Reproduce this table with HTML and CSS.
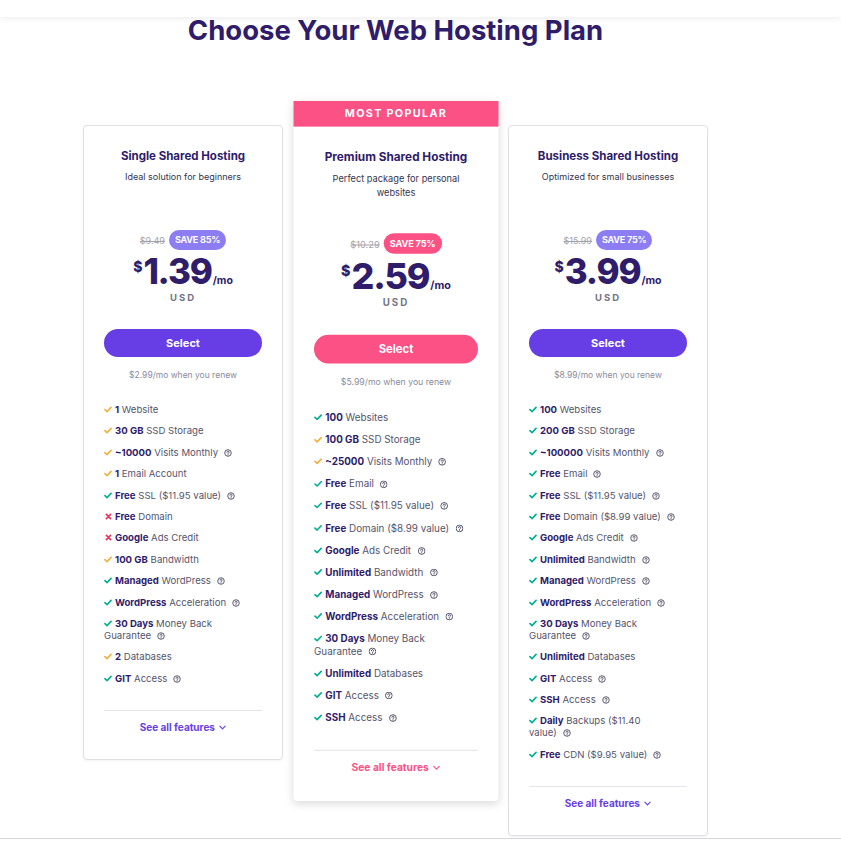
FILE: index.html
```html
<!DOCTYPE html>
<html lang="en">
<head>
<meta charset="utf-8">
<title>Choose Your Web Hosting Plan</title>
<link rel="stylesheet" href="styles.css">
</head>
<body>
<svg class="defs" width="0" height="0" aria-hidden="true">
  <symbol id="i-check" viewBox="0 0 10 8"><polyline points="1.2,4.2 3.8,6.6 8.8,1.4" fill="none" stroke="currentColor" stroke-width="2" stroke-linecap="round" stroke-linejoin="round"/></symbol>
  <symbol id="i-x" viewBox="0 0 8 8"><path d="M1.6 1.6 6.4 6.4M6.4 1.6 1.6 6.4" fill="none" stroke="currentColor" stroke-width="1.8" stroke-linecap="round"/></symbol>
  <symbol id="i-q" viewBox="0 0 10 10"><circle cx="5" cy="5" r="4.1" fill="none" stroke="currentColor" stroke-width="1"/><path d="M3.7 4.1a1.35 1.35 0 1 1 1.9 1.2c-.4.2-.6.45-.6.85v.2" fill="none" stroke="currentColor" stroke-width="1" stroke-linecap="round"/><circle cx="5" cy="7.6" r=".6" fill="currentColor"/></symbol>
  <symbol id="i-chev" viewBox="0 0 8 5"><polyline points="1,1 4,4 7,1" fill="none" stroke="currentColor" stroke-width="1.3" stroke-linecap="round" stroke-linejoin="round"/></symbol>
</svg>
<div class="topbar"></div>
<main class="content">
  <h1 class="title">Choose Your Web Hosting Plan</h1>
  <div class="plans">

    <article class="card">
      <div class="card-body">
        <div class="head">
          <h2 class="plan-name">Single Shared Hosting</h2>
          <p class="plan-desc">Ideal solution for beginners</p>
        </div>
        <div class="price-row"><span class="old">$9.49</span><span class="save">SAVE 85%</span></div>
        <div class="price"><span class="cur">$</span><span class="amt">1.39</span><span class="per">/mo</span></div>
        <div class="usd">USD</div>
        <button class="select">Select</button>
        <p class="renew">$2.99/mo when you renew</p>
        <ul class="features">
          <li><svg class="mk ok-o"><use href="#i-check"/></svg><b>1</b> Website</li>
          <li><svg class="mk ok-o"><use href="#i-check"/></svg><b>30 GB</b> SSD Storage</li>
          <li><svg class="mk ok-o"><use href="#i-check"/></svg><b>~10000</b> Visits <span class="nw">Monthly<svg class="q"><use href="#i-q"/></svg></span></li>
          <li><svg class="mk ok-o"><use href="#i-check"/></svg><b>1</b> Email Account</li>
          <li><svg class="mk ok"><use href="#i-check"/></svg><b>Free</b> SSL ($11.95 <span class="nw">value)<svg class="q"><use href="#i-q"/></svg></span></li>
          <li><svg class="mk no"><use href="#i-x"/></svg><b>Free</b> Domain</li>
          <li><svg class="mk no"><use href="#i-x"/></svg><b>Google</b> Ads Credit</li>
          <li><svg class="mk ok-o"><use href="#i-check"/></svg><b>100 GB</b> Bandwidth</li>
          <li><svg class="mk ok"><use href="#i-check"/></svg><b>Managed</b> <span class="nw">WordPress<svg class="q"><use href="#i-q"/></svg></span></li>
          <li><svg class="mk ok"><use href="#i-check"/></svg><b>WordPress</b> <span class="nw">Acceleration<svg class="q"><use href="#i-q"/></svg></span></li>
          <li><svg class="mk ok"><use href="#i-check"/></svg><b>30 Days</b> Money Back <span class="nw">Guarantee<svg class="q"><use href="#i-q"/></svg></span></li>
          <li><svg class="mk ok-o"><use href="#i-check"/></svg><b>2</b> Databases</li>
          <li><svg class="mk ok"><use href="#i-check"/></svg><b>GIT</b> <span class="nw">Access<svg class="q"><use href="#i-q"/></svg></span></li>
        </ul>
        <div class="more">See all features <svg class="chev"><use href="#i-chev"/></svg></div>
      </div>
    </article>

    <article class="card card--popular">
      <div class="banner">MOST POPULAR</div>
      <div class="card-body">
        <div class="head">
          <h2 class="plan-name">Premium Shared Hosting</h2>
          <p class="plan-desc">Perfect package for personal websites</p>
        </div>
        <div class="price-row"><span class="old">$10.29</span><span class="save save--pink">SAVE 75%</span></div>
        <div class="price"><span class="cur">$</span><span class="amt">2.59</span><span class="per">/mo</span></div>
        <div class="usd">USD</div>
        <button class="select select--pink">Select</button>
        <p class="renew">$5.99/mo when you renew</p>
        <ul class="features">
          <li><svg class="mk ok"><use href="#i-check"/></svg><b>100</b> Websites</li>
          <li><svg class="mk ok-o"><use href="#i-check"/></svg><b>100 GB</b> SSD Storage</li>
          <li><svg class="mk ok-o"><use href="#i-check"/></svg><b>~25000</b> Visits <span class="nw">Monthly<svg class="q"><use href="#i-q"/></svg></span></li>
          <li><svg class="mk ok"><use href="#i-check"/></svg><b>Free</b> <span class="nw">Email<svg class="q"><use href="#i-q"/></svg></span></li>
          <li><svg class="mk ok"><use href="#i-check"/></svg><b>Free</b> SSL ($11.95 <span class="nw">value)<svg class="q"><use href="#i-q"/></svg></span></li>
          <li><svg class="mk ok"><use href="#i-check"/></svg><b>Free</b> Domain ($8.99 <span class="nw">value)<svg class="q"><use href="#i-q"/></svg></span></li>
          <li><svg class="mk ok"><use href="#i-check"/></svg><b>Google</b> Ads <span class="nw">Credit<svg class="q"><use href="#i-q"/></svg></span></li>
          <li><svg class="mk ok"><use href="#i-check"/></svg><b>Unlimited</b> <span class="nw">Bandwidth<svg class="q"><use href="#i-q"/></svg></span></li>
          <li><svg class="mk ok"><use href="#i-check"/></svg><b>Managed</b> <span class="nw">WordPress<svg class="q"><use href="#i-q"/></svg></span></li>
          <li><svg class="mk ok"><use href="#i-check"/></svg><b>WordPress</b> <span class="nw">Acceleration<svg class="q"><use href="#i-q"/></svg></span></li>
          <li><svg class="mk ok"><use href="#i-check"/></svg><b>30 Days</b> Money Back <span class="nw">Guarantee<svg class="q"><use href="#i-q"/></svg></span></li>
          <li><svg class="mk ok"><use href="#i-check"/></svg><b>Unlimited</b> Databases</li>
          <li><svg class="mk ok"><use href="#i-check"/></svg><b>GIT</b> <span class="nw">Access<svg class="q"><use href="#i-q"/></svg></span></li>
          <li><svg class="mk ok"><use href="#i-check"/></svg><b>SSH</b> <span class="nw">Access<svg class="q"><use href="#i-q"/></svg></span></li>
        </ul>
        <div class="more more--pink">See all features <svg class="chev"><use href="#i-chev"/></svg></div>
      </div>
    </article>

    <article class="card">
      <div class="card-body">
        <div class="head">
          <h2 class="plan-name">Business Shared Hosting</h2>
          <p class="plan-desc">Optimized for small businesses</p>
        </div>
        <div class="price-row"><span class="old">$15.99</span><span class="save">SAVE 75%</span></div>
        <div class="price"><span class="cur">$</span><span class="amt">3.99</span><span class="per">/mo</span></div>
        <div class="usd">USD</div>
        <button class="select">Select</button>
        <p class="renew">$8.99/mo when you renew</p>
        <ul class="features">
          <li><svg class="mk ok"><use href="#i-check"/></svg><b>100</b> Websites</li>
          <li><svg class="mk ok"><use href="#i-check"/></svg><b>200 GB</b> SSD Storage</li>
          <li><svg class="mk ok"><use href="#i-check"/></svg><b>~100000</b> Visits <span class="nw">Monthly<svg class="q"><use href="#i-q"/></svg></span></li>
          <li><svg class="mk ok"><use href="#i-check"/></svg><b>Free</b> <span class="nw">Email<svg class="q"><use href="#i-q"/></svg></span></li>
          <li><svg class="mk ok"><use href="#i-check"/></svg><b>Free</b> SSL ($11.95 <span class="nw">value)<svg class="q"><use href="#i-q"/></svg></span></li>
          <li><svg class="mk ok"><use href="#i-check"/></svg><b>Free</b> Domain ($8.99 <span class="nw">value)<svg class="q"><use href="#i-q"/></svg></span></li>
          <li><svg class="mk ok"><use href="#i-check"/></svg><b>Google</b> Ads <span class="nw">Credit<svg class="q"><use href="#i-q"/></svg></span></li>
          <li><svg class="mk ok"><use href="#i-check"/></svg><b>Unlimited</b> <span class="nw">Bandwidth<svg class="q"><use href="#i-q"/></svg></span></li>
          <li><svg class="mk ok"><use href="#i-check"/></svg><b>Managed</b> <span class="nw">WordPress<svg class="q"><use href="#i-q"/></svg></span></li>
          <li><svg class="mk ok"><use href="#i-check"/></svg><b>WordPress</b> <span class="nw">Acceleration<svg class="q"><use href="#i-q"/></svg></span></li>
          <li><svg class="mk ok"><use href="#i-check"/></svg><b>30 Days</b> Money Back <span class="nw">Guarantee<svg class="q"><use href="#i-q"/></svg></span></li>
          <li><svg class="mk ok"><use href="#i-check"/></svg><b>Unlimited</b> Databases</li>
          <li><svg class="mk ok"><use href="#i-check"/></svg><b>GIT</b> <span class="nw">Access<svg class="q"><use href="#i-q"/></svg></span></li>
          <li><svg class="mk ok"><use href="#i-check"/></svg><b>SSH</b> <span class="nw">Access<svg class="q"><use href="#i-q"/></svg></span></li>
          <li><svg class="mk ok"><use href="#i-check"/></svg><b>Daily</b> Backups ($11.40 <span class="nw">value)<svg class="q"><use href="#i-q"/></svg></span></li>
          <li><svg class="mk ok"><use href="#i-check"/></svg><b>Free</b> CDN ($9.95 <span class="nw">value)<svg class="q"><use href="#i-q"/></svg></span></li>
        </ul>
        <div class="more">See all features <svg class="chev"><use href="#i-chev"/></svg></div>
      </div>
    </article>

  </div>
</main>
<div class="next-section"></div>
</body>
</html>
```

FILE: styles.css
```css
* { box-sizing: border-box; }
html, body { margin: 0; padding: 0; background: #fff; }
body {
  font-family: Inter, "Noto Sans", sans-serif;
  color: #2f1c6a;
  overflow: hidden;
}
.defs { position: absolute; width: 0; height: 0; overflow: hidden; }
h1, h2, p, ul { margin: 0; padding: 0; }

.topbar {
  height: 17px;
  background: #fff;
  box-shadow: 0 2px 6px rgba(0, 0, 0, 0.07);
  position: relative;
  z-index: 1;
}
.content { width: 791px; }
.title {
  font-size: 27.5px;
  line-height: 26px;
  font-weight: 700;
  text-align: center;
  color: #2f1c6a;
  margin-bottom: 58px;
}

.plans {
  display: flex;
  justify-content: center;
  align-items: flex-start;
  gap: 12.5px;
}
.card {
  width: 200px;
  margin-top: 24px;
  background: #fff;
  border: 1px solid #dfe0e6;
  border-radius: 4px;
  box-shadow: 0 1px 3px rgba(0, 0, 0, 0.05);
}
.card--popular {
  margin-top: 0;
  border: none;
  transform: scale(1.025);
  transform-origin: top center;
  box-shadow: 0 2px 8px rgba(0, 0, 0, 0.14);
}
.banner {
  height: 25px;
  background: #fc5185;
  color: #fff;
  font-size: 10.5px;
  font-weight: 700;
  letter-spacing: 1.3px;
  line-height: 25px;
  text-align: center;
}
.card-body { padding: 22px 20px 26px; }
.card--popular .card-body { padding-bottom: 27px; }
.card--popular .features li { margin-bottom: 9.6px; }

.head { height: 82px; text-align: center; }
.plan-name {
  font-size: 11.5px;
  line-height: 16px;
  font-weight: 700;
  color: #2f1c6a;
}
.plan-desc {
  margin-top: 6px;
  padding: 0 8px;
  font-size: 9px;
  line-height: 14px;
  color: #36344d;
}

.price-row {
  height: 20px;
  display: flex;
  justify-content: center;
  align-items: center;
  gap: 4px;
}
.old {
  font-size: 9px;
  color: #a3a3ad;
  text-decoration: line-through;
}
.save {
  height: 20px;
  line-height: 20px;
  padding: 0 6px;
  border-radius: 10px;
  background: #8c7df2;
  color: #fff;
  font-size: 9px;
  font-weight: 700;
  letter-spacing: -0.2px;
}
.save--pink { background: #fc5185; }

.price {
  margin-top: 8px;
  display: flex;
  justify-content: center;
  align-items: baseline;
  color: #2f1c6a;
  font-weight: 800;
  white-space: nowrap;
}
.cur {
  align-self: flex-start;
  margin-top: 4px;
  margin-right: 1px;
  font-size: 14px;
  line-height: 10px;
}
.amt { font-size: 35px; line-height: 26px; letter-spacing: -1.2px; }
.per { font-size: 10.5px; line-height: 10px; font-weight: 700; margin-left: 1px; }

.usd {
  margin-top: 6px;
  line-height: 12px;
  text-align: center;
  font-size: 9.5px;
  font-weight: 700;
  letter-spacing: 2px;
  color: #727586;
}

.select {
  display: block;
  width: 100%;
  height: 28px;
  margin-top: 25px;
  border: none;
  border-radius: 14px;
  background: #673de6;
  color: #fff;
  font-family: inherit;
  font-size: 11px;
  font-weight: 700;
  cursor: pointer;
}
.select--pink { background: #fc5185; }

.renew {
  margin-top: 12px;
  line-height: 12px;
  text-align: center;
  font-size: 8.5px;
  color: #8a8c9a;
}

.features {
  list-style: none;
  margin-top: 23px;
  padding-right: 10px;
}
.features li {
  font-size: 9.6px;
  line-height: 12px;
  color: #55546b;
  margin-bottom: 9.4px;
}
.features b { font-weight: 700; color: #2f1c6a; }
.nw { white-space: nowrap; }
.mk {
  width: 8px;
  height: 7px;
  margin-right: 3px;
  vertical-align: 0;
}
.ok { color: #00b090; }
.ok-o { color: #f0b040; }
.no { color: #e0325e; width: 7px; height: 7px; margin-left: 1px; }
.q {
  width: 8px;
  height: 8px;
  margin-left: 6px;
  vertical-align: -1px;
  color: #36344d;
}

.more {
  margin-top: 25px;
  padding-top: 10px;
  border-top: 1px solid #e3e3ea;
  line-height: 12px;
  text-align: center;
  font-size: 10px;
  font-weight: 700;
  color: #673de6;
}
.more--pink { color: #fc5185; }
.chev { width: 7px; height: 5px; margin-left: 2px; vertical-align: 1px; }

.next-section {
  margin-top: 2px;
  border-top: 1px solid #d6d6dc;
  height: 20px;
}
```
